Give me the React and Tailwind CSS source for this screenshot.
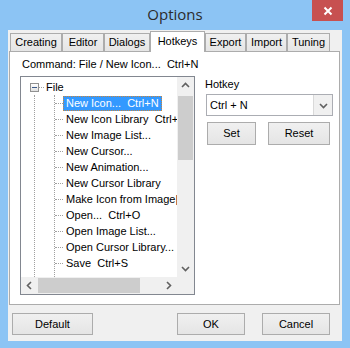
import React from 'react';

const tabs = [
  { label: 'Creating', w: 'w-[52px]' },
  { label: 'Editor', w: 'w-[42px]' },
  { label: 'Dialogs', w: 'w-[46px]' },
  { label: 'Hotkeys', w: 'w-[55px]', active: true },
  { label: 'Export', w: 'w-[41px]' },
  { label: 'Import', w: 'w-[41px]' },
  { label: 'Tuning', w: 'w-[43px]' },
];

const items = [
  'New Icon...  Ctrl+N',
  'New Icon Library  Ctrl+',
  'New Image List...',
  'New Cursor...',
  'New Animation...',
  'New Cursor Library',
  'Make Icon from Image|',
  'Open...  Ctrl+O',
  'Open Image List...',
  'Open Cursor Library...',
  'Save  Ctrl+S',
];

const Chevron = ({ dir }) => {
  const pts = {
    up: '1,6 4.5,2.5 8,6',
    down: '1,3 4.5,6.5 8,3',
    left: '6,1 2.5,4.5 6,8',
    right: '3,1 6.5,4.5 3,8',
  }[dir];
  return (
    <svg width="9" height="9" viewBox="0 0 9 9">
      <polyline points={pts} fill="none" stroke="#606060" strokeWidth="1.6" />
    </svg>
  );
};

const Button = ({ children, className }) => (
  <div
    className={`h-[22px] flex items-center justify-center border border-[#acacac] bg-gradient-to-b from-[#f0f0f0] to-[#e5e5e5] text-black ${className}`}
  >
    {children}
  </div>
);

export default function App() {
  return (
    <div
      className="w-[350px] h-[348px] bg-[#8cc4f4] flex flex-col text-[11px] leading-[13px] text-black"
      style={{ fontFamily: '"Liberation Sans", Arial, sans-serif' }}
    >
      {/* title bar */}
      <div className="relative h-[30px] flex items-center justify-center">
        <span
          className="text-[15px] leading-[20px] text-[#2b2b2b] -mt-[2px]"
          style={{ fontFamily: '"Open Sans", "Noto Sans", sans-serif' }}
        >
          Options
        </span>
        <div className="absolute top-0 right-[7px] w-[31px] h-[21px] bg-[#c75050] flex items-center justify-center">
          <svg width="10" height="10" viewBox="0 0 10 10">
            <path d="M1.5 1.5 L8.5 8.5 M8.5 1.5 L1.5 8.5" stroke="#fff" strokeWidth="2" />
          </svg>
        </div>
      </div>

      {/* client */}
      <div className="ml-[8px] w-[334px] h-[311px] bg-[#f0f0f0] flex flex-col">
        {/* tabs */}
        <div className="h-[21px] flex items-end pl-[2px]">
          {tabs.map((t) =>
            t.active ? (
              <div
                key={t.label}
                className={`${t.w} h-[21px] -mb-[1px] relative z-10 bg-white border border-b-0 border-[#acacac] flex items-center justify-center pb-[1px]`}
              >
                {t.label}
              </div>
            ) : (
              <div
                key={t.label}
                className={`${t.w} h-[18px] border border-b-0 border-[#acacac] bg-gradient-to-b from-[#f0f0f0] to-[#e5e5e5] flex items-center justify-center`}
              >
                {t.label}
              </div>
            )
          )}
        </div>

        {/* panel */}
        <div className="ml-[1px] w-[331px] h-[254px] border border-[#acacac] bg-white flex flex-col">
          <div className="mt-[6px] pl-[12px] whitespace-pre">Command: File / New Icon...  Ctrl+N</div>

          <div className="mt-[5px] flex">
            {/* tree */}
            <div className="ml-[10px] w-[175px] h-[219px] border border-[#828790] bg-white flex flex-col">
              <div className="flex h-[200px]">
                <div className="w-[156px] overflow-hidden pt-[2px] whitespace-pre flex flex-col">
                  <div className="h-[16px] flex items-center pl-[9px]">
                    <div className="w-[9px] h-[9px] border border-[#919191] bg-gradient-to-b from-white to-[#e0e0e0] flex items-center justify-center">
                      <div className="w-[5px] h-[1px] bg-[#3c5a8a]" />
                    </div>
                    <div className="w-[5px] border-t border-dotted border-[#a0a0a0]" />
                    <span className="pl-[2px]">File</span>
                  </div>
                  <div className="flex flex-1">
                    <div className="w-[13px] shrink-0" />
                    <div className="w-[20px] shrink-0 border-l border-dotted border-[#a0a0a0]" />
                    <div className="border-l border-dotted border-[#a0a0a0]">
                      {items.map((it, i) => (
                        <div key={it} className="h-[16px] flex items-center">
                          <div className="w-[8px] border-t border-dotted border-[#a0a0a0]" />
                          {i === 0 ? (
                            <span className="h-[15px] flex items-center px-[2px] bg-[#3399ff] text-white border border-dotted border-[#c9843a]">
                              {it}
                            </span>
                          ) : (
                            <span className="px-[3px]">{it}</span>
                          )}
                        </div>
                      ))}
                    </div>
                  </div>
                </div>
                {/* vertical scrollbar */}
                <div className="w-[17px] bg-[#f0f0f0] flex flex-col">
                  <div className="h-[17px] flex items-center justify-center">
                    <Chevron dir="up" />
                  </div>
                  <div className="mx-[1px] mt-[2px] h-[64px] bg-[#cdcdcd]" />
                  <div className="flex-1" />
                  <div className="h-[17px] flex items-center justify-center">
                    <Chevron dir="down" />
                  </div>
                </div>
              </div>
              {/* horizontal scrollbar */}
              <div className="h-[17px] flex">
                <div className="w-[156px] bg-[#f0f0f0] flex items-center">
                  <div className="w-[17px] flex items-center justify-center">
                    <Chevron dir="left" />
                  </div>
                  <div className="w-[102px] h-[15px] bg-[#cdcdcd]" />
                  <div className="flex-1" />
                  <div className="w-[17px] flex items-center justify-center">
                    <Chevron dir="right" />
                  </div>
                </div>
                <div className="flex-1 bg-[#f0f0f0]" />
              </div>
            </div>

            {/* hotkey */}
            <div className="ml-[10px] flex flex-col">
              <div className="mt-[2px]">Hotkey</div>
              <div className="mt-[3px] ml-[1px] w-[127px] h-[22px] border border-[#abadb3] bg-white flex">
                <div className="flex-1 flex items-center pl-[3px]">Ctrl + N</div>
                <div className="w-[19px] border-l border-[#d9d9d9] bg-[#f0f0f0] flex items-center justify-center">
                  <Chevron dir="down" />
                </div>
              </div>
              <div className="mt-[6px] ml-[2px] flex gap-[12px]">
                <Button className="w-[49px] h-[23px]">Set</Button>
                <Button className="w-[62px] h-[23px]">Reset</Button>
              </div>
            </div>
          </div>
        </div>

        {/* bottom buttons */}
        <div className="mt-[8px] flex">
          <Button className="ml-[4px] w-[81px]">Default</Button>
          <div className="flex-1" />
          <Button className="w-[68px]">OK</Button>
          <Button className="ml-[17px] mr-[12px] w-[68px]">Cancel</Button>
        </div>
      </div>
    </div>
  );
}
